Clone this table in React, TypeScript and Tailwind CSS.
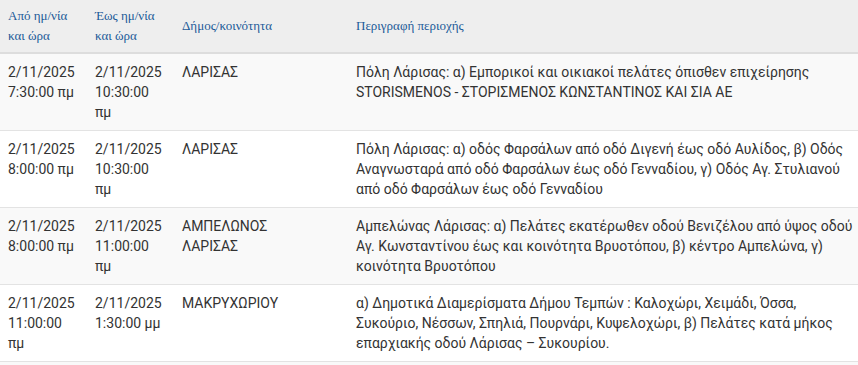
import React from "react";

const rows = [
  {
    from: ["2/11/2025", "7:30:00 πμ"],
    to: ["2/11/2025", "10:30:00 πμ"],
    area: "ΛΑΡΙΣΑΣ",
    desc: "Πόλη Λάρισας: α) Εμπορικοί και οικιακοί πελάτες όπισθεν επιχείρησης STORISMENOS - ΣΤΟΡΙΣΜΕΝΟΣ ΚΩΝΣΤΑΝΤΙΝΟΣ ΚΑΙ ΣΙΑ ΑΕ",
  },
  {
    from: ["2/11/2025", "8:00:00 πμ"],
    to: ["2/11/2025", "10:30:00 πμ"],
    area: "ΛΑΡΙΣΑΣ",
    desc: "Πόλη Λάρισας: α) οδός Φαρσάλων από οδό Διγενή έως οδό Αυλίδος, β) Οδός Αναγνωσταρά από οδό Φαρσάλων έως οδό Γενναδίου, γ) Οδός Αγ. Στυλιανού από οδό Φαρσάλων έως οδό Γενναδίου",
  },
  {
    from: ["2/11/2025", "8:00:00 πμ"],
    to: ["2/11/2025", "11:00:00 πμ"],
    area: "ΑΜΠΕΛΩΝΟΣ ΛΑΡΙΣΑΣ",
    desc: "Αμπελώνας Λάρισας: α) Πελάτες εκατέρωθεν οδού Βενιζέλου από ύψος οδού Αγ. Κωνσταντίνου έως και κοινότητα Βρυοτόπου, β) κέντρο Αμπελώνα, γ) κοινότητα Βρυοτόπου",
  },
  {
    from: ["2/11/2025", "11:00:00 πμ"],
    to: ["2/11/2025", "1:30:00 μμ"],
    area: "ΜΑΚΡΥΧΩΡΙΟΥ",
    desc: "α) Δημοτικά Διαμερίσματα Δήμου Τεμπών : Καλοχώρι, Χειμάδι, Όσσα, Συκούριο, Νέσσων, Σπηλιά, Πουρνάρι, Κυψελοχώρι, β) Πελάτες κατά μήκος επαρχιακής οδού Λάρισας – Συκουρίου.",
  },
];

export default function App() {
  return (
    <div className="w-[858px] h-[365px] overflow-hidden bg-white">
      <table
        className="w-full table-fixed border-collapse text-[14px] leading-[20px] text-[#333333]"
        style={{ fontFamily: "Roboto, 'Noto Sans', sans-serif" }}
      >
        <colgroup>
          <col className="w-[87px]" />
          <col className="w-[87px]" />
          <col className="w-[174px]" />
          <col />
        </colgroup>
        <thead>
          <tr className="bg-[#eeeeee] border-b-2 border-[#dddddd]">
            {["Από ημ/νία και ώρα", "Έως ημ/νία και ώρα", "Δήμος/κοινότητα", "Περιγραφή περιοχής"].map((h, i) => (
              <th
                key={i}
                className={`h-[53px] pl-2 ${i === 2 ? "pr-6" : "pr-2"} text-left align-middle font-normal text-[13px] leading-[20px] text-[#1c5a98]`}
                style={{ fontFamily: "'Liberation Serif', 'DejaVu Serif', serif" }}
              >
                {h}
              </th>
            ))}
          </tr>
        </thead>
        <tbody>
          {rows.map((r, i) => (
            <tr key={i} className={`${i % 2 === 0 ? "bg-[#f9f9f9]" : "bg-white"} ${i > 0 ? "border-t border-[#e3e3e3]" : ""}`}>
              <td className="pl-2 pr-2 pt-2 pb-2 align-top">
                {r.from[0]} {r.from[1]}
              </td>
              <td className="pl-2 pr-2 pt-2 pb-2 align-top">
                {r.to[0]} {r.to[1]}
              </td>
              <td className="pl-2 pr-6 pt-2 pb-2 align-top">{r.area}</td>
              <td className="pl-2 pr-1 pt-2 pb-2 align-top">{r.desc}</td>
            </tr>
          ))}
          <tr className="bg-[#f9f9f9] border-t border-[#e3e3e3]">
            <td className="h-[40px]" />
            <td />
            <td />
            <td />
          </tr>
        </tbody>
      </table>
    </div>
  );
}
